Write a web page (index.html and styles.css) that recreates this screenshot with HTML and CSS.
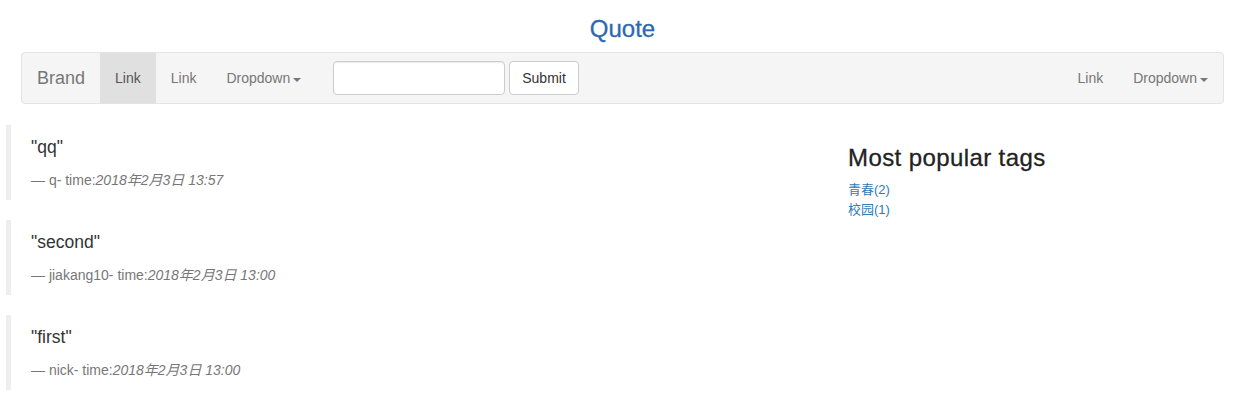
FILE: index.html
```html
<!DOCTYPE html>
<html>
<head>
<meta charset="utf-8">
<link rel="stylesheet" href="styles.css">
</head>
<body>
<div class="page">
  <h3 class="title">Quote</h3>
  <nav class="navbar">
    <a class="brand" href="#">Brand</a>
    <ul class="nav">
      <li class="active"><a href="#">Link</a></li>
      <li><a href="#">Link</a></li>
      <li><a href="#">Dropdown<span class="caret"></span></a></li>
    </ul>
    <form class="navform">
      <input class="form-control" type="text">
      <button class="btn" type="button">Submit</button>
    </form>
    <ul class="nav nav-right">
      <li><a href="#">Link</a></li>
      <li><a href="#">Dropdown<span class="caret"></span></a></li>
    </ul>
  </nav>
</div>
<div class="main">
  <div class="quotes">
    <blockquote>
      <p>"qq"</p>
      <footer>q- time:<em>2018年2月3日 13:57</em></footer>
    </blockquote>
    <blockquote>
      <p>"second"</p>
      <footer>jiakang10- time:<em>2018年2月3日 13:00</em></footer>
    </blockquote>
    <blockquote>
      <p>"first"</p>
      <footer>nick- time:<em>2018年2月3日 13:00</em></footer>
    </blockquote>
  </div>
  <div class="side">
    <h3 class="side-title">Most popular tags</h3>
    <div class="tags">
      <a href="#">青春(2)</a>
      <a href="#">校园(1)</a>
    </div>
  </div>
</div>
</body>
</html>
```

FILE: styles.css
```css
* { box-sizing: border-box; }
html, body {
  margin: 0;
  padding: 0;
  background: #fff;
}
body {
  font-family: "Liberation Sans", "Noto Sans CJK SC", sans-serif;
  font-size: 14px;
  line-height: 1.42857;
  color: #333;
}
a { text-decoration: none; }
.page {
  padding: 0 15px 0 21px;
}
.title {
  margin: 16px 0 10px;
  font-size: 24px;
  line-height: 26.4px;
  font-weight: 500;
  text-align: center;
  color: #2b68b0;
  -webkit-text-stroke: 0.3px #2b68b0;
}
.navbar {
  display: flex;
  align-items: flex-start;
  min-height: 52px;
  background: #f5f5f5;
  border: 1px solid #e3e3e3;
  border-radius: 4px;
  margin-bottom: 21px;
}
.brand {
  display: block;
  height: 50px;
  padding: 15px 15px;
  font-size: 18px;
  line-height: 20px;
  color: #777;
}
.nav {
  display: flex;
  list-style: none;
  margin: 0;
  padding: 0;
}
.nav li a {
  display: block;
  padding: 15px 15px;
  line-height: 20px;
  color: #777;
}
.nav li.active a {
  background: #e0e0e0;
  color: #555;
}
.caret {
  display: inline-block;
  width: 0;
  height: 0;
  margin-left: 3px;
  vertical-align: middle;
  border-top: 4px solid;
  border-right: 4px solid transparent;
  border-left: 4px solid transparent;
}
.navform {
  display: flex;
  gap: 4px;
  padding: 8px 15px 8px 17px;
  margin: 0;
}
.form-control {
  width: 172px;
  height: 34px;
  padding: 6px 12px;
  font-size: 14px;
  border: 1px solid #ccc;
  border-radius: 4px;
  box-shadow: inset 0 1px 1px rgba(0,0,0,.075);
  background: #fff;
  font-family: inherit;
}
.btn {
  height: 34px;
  padding: 6px 12px;
  font-size: 14px;
  line-height: 20px;
  color: #333;
  background: #fff;
  border: 1px solid #ccc;
  border-radius: 4px;
  font-family: inherit;
}
.nav-right {
  margin-left: auto;
}
.main {
  display: grid;
  grid-template-columns: 842px 1fr;
  margin-left: 6px;
}
blockquote {
  margin: 0 0 20px;
  padding: 10px 20px;
  border-left: 5px solid #eee;
  font-size: 17.5px;
}
blockquote p {
  margin: 0 0 10px;
  line-height: 25px;
}
blockquote footer {
  display: block;
  font-size: 14px;
  line-height: 20px;
  color: #777;
}
blockquote footer::before {
  content: "\2014 \00A0";
}
.side-title {
  margin: 20px 0 10px;
  font-size: 24px;
  line-height: 26.4px;
  font-weight: 500;
  color: #222;
  letter-spacing: 0.4px;
  -webkit-text-stroke: 0.3px #222;
}
.tags {
  display: flex;
  flex-direction: column;
  align-items: flex-start;
  font-size: 13px;
  line-height: 20px;
  margin-top: -2px;
}
.tags a {
  color: #337ab7;
}
```
